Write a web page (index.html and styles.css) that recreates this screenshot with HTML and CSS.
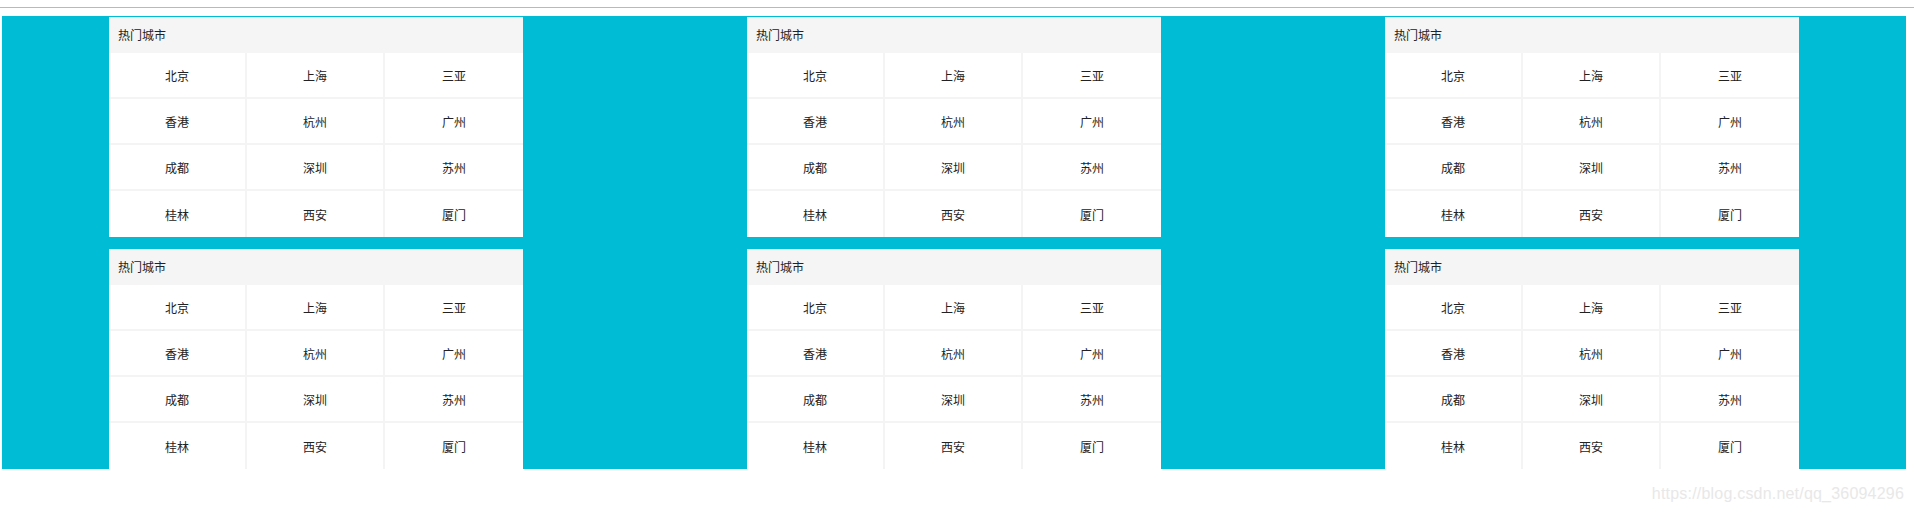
FILE: index.html
```html
<!DOCTYPE html>
<html lang="zh-CN">
<head>
<meta charset="utf-8">
<title>热门城市</title>
<link rel="stylesheet" href="styles.css">
</head>
<body>
<div class="topline"></div>
<div class="panel">
  <div class="row">
    <div class="card">
      <div class="card-head">热门城市</div>
      <div class="grid">
        <div class="cell">北京</div><div class="cell">上海</div><div class="cell">三亚</div>
        <div class="cell">香港</div><div class="cell">杭州</div><div class="cell">广州</div>
        <div class="cell">成都</div><div class="cell">深圳</div><div class="cell">苏州</div>
        <div class="cell">桂林</div><div class="cell">西安</div><div class="cell">厦门</div>
      </div>
    </div>
    <div class="card">
      <div class="card-head">热门城市</div>
      <div class="grid">
        <div class="cell">北京</div><div class="cell">上海</div><div class="cell">三亚</div>
        <div class="cell">香港</div><div class="cell">杭州</div><div class="cell">广州</div>
        <div class="cell">成都</div><div class="cell">深圳</div><div class="cell">苏州</div>
        <div class="cell">桂林</div><div class="cell">西安</div><div class="cell">厦门</div>
      </div>
    </div>
    <div class="card">
      <div class="card-head">热门城市</div>
      <div class="grid">
        <div class="cell">北京</div><div class="cell">上海</div><div class="cell">三亚</div>
        <div class="cell">香港</div><div class="cell">杭州</div><div class="cell">广州</div>
        <div class="cell">成都</div><div class="cell">深圳</div><div class="cell">苏州</div>
        <div class="cell">桂林</div><div class="cell">西安</div><div class="cell">厦门</div>
      </div>
    </div>
  </div>
  <div class="row">
    <div class="card">
      <div class="card-head">热门城市</div>
      <div class="grid">
        <div class="cell">北京</div><div class="cell">上海</div><div class="cell">三亚</div>
        <div class="cell">香港</div><div class="cell">杭州</div><div class="cell">广州</div>
        <div class="cell">成都</div><div class="cell">深圳</div><div class="cell">苏州</div>
        <div class="cell">桂林</div><div class="cell">西安</div><div class="cell">厦门</div>
      </div>
    </div>
    <div class="card">
      <div class="card-head">热门城市</div>
      <div class="grid">
        <div class="cell">北京</div><div class="cell">上海</div><div class="cell">三亚</div>
        <div class="cell">香港</div><div class="cell">杭州</div><div class="cell">广州</div>
        <div class="cell">成都</div><div class="cell">深圳</div><div class="cell">苏州</div>
        <div class="cell">桂林</div><div class="cell">西安</div><div class="cell">厦门</div>
      </div>
    </div>
    <div class="card">
      <div class="card-head">热门城市</div>
      <div class="grid">
        <div class="cell">北京</div><div class="cell">上海</div><div class="cell">三亚</div>
        <div class="cell">香港</div><div class="cell">杭州</div><div class="cell">广州</div>
        <div class="cell">成都</div><div class="cell">深圳</div><div class="cell">苏州</div>
        <div class="cell">桂林</div><div class="cell">西安</div><div class="cell">厦门</div>
      </div>
    </div>
  </div>
</div>
<div class="watermark">https://blog.csdn.net/qq_36094296</div>
</body>
</html>
```

FILE: styles.css
```css
html, body {
  margin: 0;
  padding: 0;
  background: #ffffff;
}

body {
  position: relative;
  width: 1914px;
  height: 512px;
  overflow: hidden;
  font-family: "Noto Sans CJK SC", "Microsoft YaHei", sans-serif;
  color: #222222;
}

.topline {
  height: 1px;
  margin-top: 7px;
  background: #b9b9b9;
}

.panel {
  box-sizing: border-box;
  width: 1904px;
  margin: 8px 0 0 2px;
  padding-top: 1px;
  background: #00bcd4;
  display: flex;
  flex-direction: column;
  gap: 12px;
}

.row {
  display: flex;
  padding-left: 107px;
  gap: 224px;
}

.card {
  width: 414px;
  background: #ffffff;
}

.card-head {
  height: 36px;
  line-height: 36px;
  padding-left: 9px;
  background: #f5f5f5;
  font-size: 12px;
  color: #222222;
}

.grid {
  display: grid;
  grid-template-columns: repeat(3, 1fr);
}

.cell {
  box-sizing: border-box;
  height: 46px;
  display: flex;
  align-items: center;
  justify-content: center;
  font-size: 12px;
  border-right: 2px solid #f4f4f4;
  border-bottom: 2px solid #f4f4f4;
}

.cell:nth-child(3n) {
  border-right: none;
}

.cell:nth-last-child(-n+3) {
  border-bottom: none;
}

.watermark {
  position: absolute;
  right: 10px;
  top: 485px;
  font-family: "Liberation Sans", Arial, sans-serif;
  font-size: 16px;
  color: #e8e8e8;
  letter-spacing: 0.2px;
}
```
